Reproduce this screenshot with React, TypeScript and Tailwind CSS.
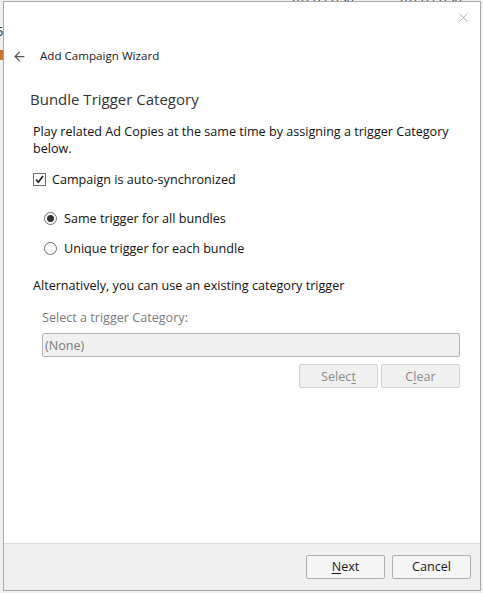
import { ArrowLeft, X } from "lucide-react";

const font = { fontFamily: '"Open Sans", "Noto Sans", sans-serif' };

function Btn({ label, u, disabled }: { label: string; u: number; disabled?: boolean }) {
    return (
        <button
            className={`flex h-[24px] w-[79px] items-center justify-center rounded-[2px] border text-[12.6px] ${
                disabled
                    ? "border-[#cfcfcf] bg-[#f0f0f0] text-[#8a8a8a]"
                    : "border-[#adadad] bg-[#f5f5f5] text-[#1a1a1a]"
            }`}
        >
            {u < 0 ? (
                label
            ) : (
                <>
                    {label.slice(0, u)}
                    <span className="underline underline-offset-2">{label[u]}</span>
                    {label.slice(u + 1)}
                </>
            )}
        </button>
    );
}

export default function App() {
    return (
        <div className="relative h-[593px] w-[483px] overflow-hidden bg-[#f0f0f0]" style={font}>
            {/* bits of the window behind */}
            <div className="absolute left-[290px] top-[-9px] text-[12px] text-[#333]">2021/12/30</div>
            <div className="absolute left-[398px] top-[-9px] text-[12px] text-[#333]">2021/12/30</div>
            <div className="absolute left-[-4px] top-[22px] text-[13px] text-[#333]">5</div>
            <div className="absolute left-0 top-[50px] h-[10px] w-[3px] bg-[#c87a2a]" />

            <div className="absolute left-[3px] top-[1px] flex h-[590px] w-[478px] flex-col border border-[#a8a8a8] bg-white">
                <div className="flex h-[34px] justify-end pr-[9px] pt-[8px]">
                    <X size={15} strokeWidth={1} className="text-[#8a8a8a]" />
                </div>
                <div className="flex h-[40px] items-center gap-[13px] pl-[8px]">
                    <ArrowLeft size={15} strokeWidth={2} className="text-[#555]" />
                    <span className="text-[11.6px] text-[#1a1a1a]">Add Campaign Wizard</span>
                </div>
                <div className="flex flex-1 flex-col pl-[26px] pr-[20px] text-[12.6px] leading-[17px] text-[#111]">
                    <div className="mt-[12px] text-[15px] leading-[22px] text-[#333]">Bundle Trigger Category</div>
                    <div className="mt-[13px] pl-[3px]">
                        Play related Ad Copies at the same time by assigning a trigger Category below.
                    </div>
                    <label className="mt-[14px] flex items-center gap-[6px] pl-[3px]">
                        <span className="flex h-[13px] w-[13px] items-center justify-center border border-[#6d6d6d] bg-white">
                            <svg width="11" height="11" viewBox="0 0 11 11">
                                <path d="M2 5.5 L4.3 8.2 L9 2" fill="none" stroke="#1a1a1a" strokeWidth="1.6" />
                            </svg>
                        </span>
                        Campaign is auto-synchronized
                    </label>
                    <div className="mt-[22px] flex flex-col gap-[13px] pl-[14px]">
                        <label className="flex items-center gap-[7px]">
                            <span className="flex h-[13px] w-[13px] items-center justify-center rounded-full border border-[#6d6d6d]">
                                <span className="h-[7px] w-[7px] rounded-full bg-[#333]" />
                            </span>
                            Same trigger for all bundles
                        </label>
                        <label className="flex items-center gap-[7px]">
                            <span className="h-[13px] w-[13px] rounded-full border border-[#6d6d6d]" />
                            Unique trigger for each bundle
                        </label>
                    </div>
                    <div className="mt-[20px] pl-[3px]">
                        Alternatively, you can use an existing category trigger
                    </div>
                    <div className="flex flex-col pl-[12px]">
                        <div className="mt-[15px] text-[#7a7a7a]">Select a trigger Category:</div>
                        <div className="mt-[7px] flex h-[24px] items-center rounded-[2px] border border-[#b5b5b5] bg-[#f0f0f0] px-[2px] text-[#7a7a7a]">
                            (None)
                        </div>
                        <div className="mt-[7px] flex justify-end gap-[3px]">
                            <Btn label="Select" u={5} disabled />
                            <Btn label="Clear" u={1} disabled />
                        </div>
                    </div>
                </div>
                <div className="flex h-[47px] items-center justify-end gap-[7px] border-t border-[#dcdcdc] bg-[#f0f0f0] pr-[9px]">
                    <Btn label="Next" u={0} />
                    <Btn label="Cancel" u={-1} />
                </div>
            </div>
        </div>
    );
}
